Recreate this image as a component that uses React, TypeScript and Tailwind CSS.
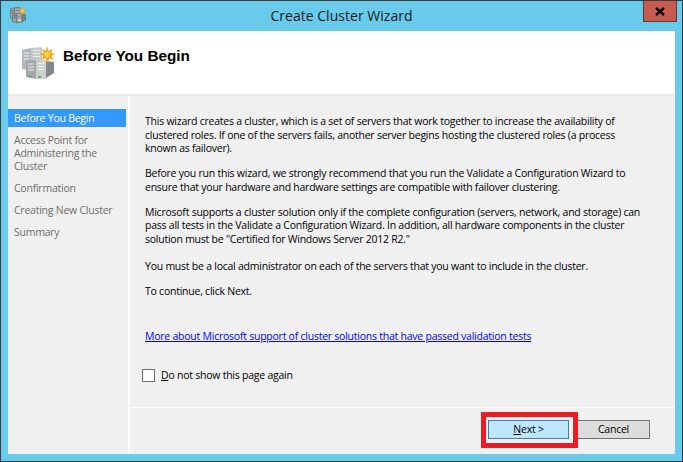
const STEPS = [
  { label: "Access Point for\nAdministering the\nCluster" },
  { label: "Confirmation" },
  { label: "Creating New Cluster" },
  { label: "Summary" },
];

function ServerIcon({ size, small }: { size: number; small?: boolean }) {
  const edge = small ? "#55595c" : "none";
  return (
    <svg width={size} height={size} viewBox="0 0 34 34">
      <g stroke={edge} strokeWidth={small ? 1.4 : 0}>
        <path d="M1 4 L10 2 L10 24 L1 23 Z" fill="#b3b7b9" />
        <path d="M10 2 L21 1 L21 20 L10 21 Z" fill="#c6c9ca" />
        <path d="M25 15 L33 16 L33 27 L25 32 Z" fill="#83888b" />
        <path d="M5 15 L15 14 L15 33 L5 31 Z" fill="#a3a7a9" />
        <path d="M15 14 L25 14 L25 33 L15 33 Z" fill="#cdd0d1" />
      </g>
      <path d="M2.5 7 H8.5 M2.5 10 H8.5 M2.5 13 H8.5 M12 4.5 H19 M12 7.5 H19 M12 10.5 H19 M7 18 H13 M7 21 H13 M7 24 H13 M17 17.5 H23 M17 20.5 H23 M17 23.5 H23" stroke={small ? "#4d5154" : "#eef0f0"} strokeWidth="1.2" />
      <path d="M8 29.5 h2.5 v2 h-2.5 Z M17 30 h3 v2 h-3 Z" fill="#4fb848" />
      <path d="M26 0 L27.6 5 L31.6 2.4 L30 6.8 L34 8 L30.4 10 L33 14 L28.4 12.2 L26.4 17 L24.6 12.2 L20 14 L22.4 10 L18 8 L22.6 6.8 L21 2.4 L25 5 Z" fill="#f7a81b" />
      <circle cx="26.2" cy="8.6" r="2.8" fill="#ffd34d" />
    </svg>
  );
}

export default function App() {
  return (
    <div className="relative w-[683px] h-[462px] bg-[#69cbec] border border-[#3c3c3c] flex flex-col font-['Open_Sans',sans-serif] text-[10.5px] tracking-[-0.24px] leading-[13.5px] text-black overflow-hidden">
      <div className="h-[30px] shrink-0 relative">
        <div className="absolute left-[9px] top-[6px]">
          <ServerIcon size={16} small />
        </div>
        <div className="w-full text-center text-[14px] tracking-[0.03px] leading-[30px] text-[#1a1a1a]">Create Cluster Wizard</div>
        <div className="absolute right-[5px] top-[-1px] w-[34px] h-[22px] bg-[#c75b50] border border-[#5a3a38] flex items-center justify-center">
          <svg width="10" height="9" viewBox="0 0 10 9">
            <path d="M1 1 L9 8 M9 1 L1 8" stroke="#000" strokeWidth="2.4" />
          </svg>
        </div>
      </div>

      <div className="mx-[7px] mb-[7px] flex-1 flex flex-col bg-[#f0f0f0] min-h-0">
        <div className="h-[65px] shrink-0 bg-white flex items-start border-b-2 border-[#e9e9e9] pl-[13px] pt-[15px]">
          <ServerIcon size={34} />
          <div className="ml-[8px] mt-[1px] font-['Liberation_Sans',sans-serif] font-bold text-[15.3px] tracking-normal leading-[18px]">Before You Begin</div>
        </div>

        <div className="flex-1 flex min-h-0">
          <div className="w-[120px] shrink-0 pt-[13px] text-[#6d6d6d] leading-[13px]">
            <div className="w-[118px] h-[18px] bg-[#3399ff] text-white pl-[6px] flex items-center">Before You Begin</div>
            <div className="mt-[7px] flex flex-col gap-[9px]">
              {STEPS.map((step) => (
                <div key={step.label} className="pl-[6px] whitespace-pre-line">
                  {step.label}
                </div>
              ))}
            </div>
          </div>

          <div className="flex-1 flex flex-col border-l-2 border-white min-w-0">
            <div className="h-[312px] shrink-0 pl-[15px] pt-[19px] border-b border-white whitespace-nowrap">
              <p>
                This wizard creates a cluster, which is a set of servers that work together to increase the availability of<br />
                clustered roles. If one of the servers fails, another server begins hosting the clustered roles (a process<br />
                known as failover).
              </p>
              <p className="mt-[11.5px]">
                Before you run this wizard, we strongly recommend that you run the Validate a Configuration Wizard to<br />
                ensure that your hardware and hardware settings are compatible with failover clustering.
              </p>
              <p className="mt-[11.5px]">
                Microsoft supports a cluster solution only if the complete configuration (servers, network, and storage) can<br />
                pass all tests in the Validate a Configuration Wizard. In addition, all hardware components in the cluster<br />
                solution must be "Certified for Windows Server 2012 R2."
              </p>
              <p className="mt-[14px]">You must be a local administrator on each of the servers that you want to include in the cluster.</p>
              <p className="mt-[11.5px]">To continue, click Next.</p>
              <p className="mt-[31px] text-[#0000ff] underline">More about Microsoft support of cluster solutions that have passed validation tests</p>
              <div className="mt-[26px] -ml-[3px] flex items-center">
                <span className="w-[13px] h-[13px] bg-white border border-[#707070] mr-[6px]" />
                <span><span className="underline">D</span>o not show this page again</span>
              </div>
            </div>

            <div className="flex-1 flex items-start justify-end pr-[25px] pt-[12px]">
              <div className="w-[81px] h-[19px] bg-[#bee6fd] border border-[#3c7fb1] flex items-center justify-center">
                <span><span className="underline">N</span>ext &gt;</span>
              </div>
              <div className="w-[73px] h-[19px] ml-[8px] bg-[#dddddd] border border-[#707070] flex items-center justify-center">Cancel</div>
            </div>
          </div>
        </div>
      </div>

      <div className="absolute left-[480px] top-[411px] w-[97px] h-[36px] border-[5px] border-[#ed1c24]" />
    </div>
  );
}
